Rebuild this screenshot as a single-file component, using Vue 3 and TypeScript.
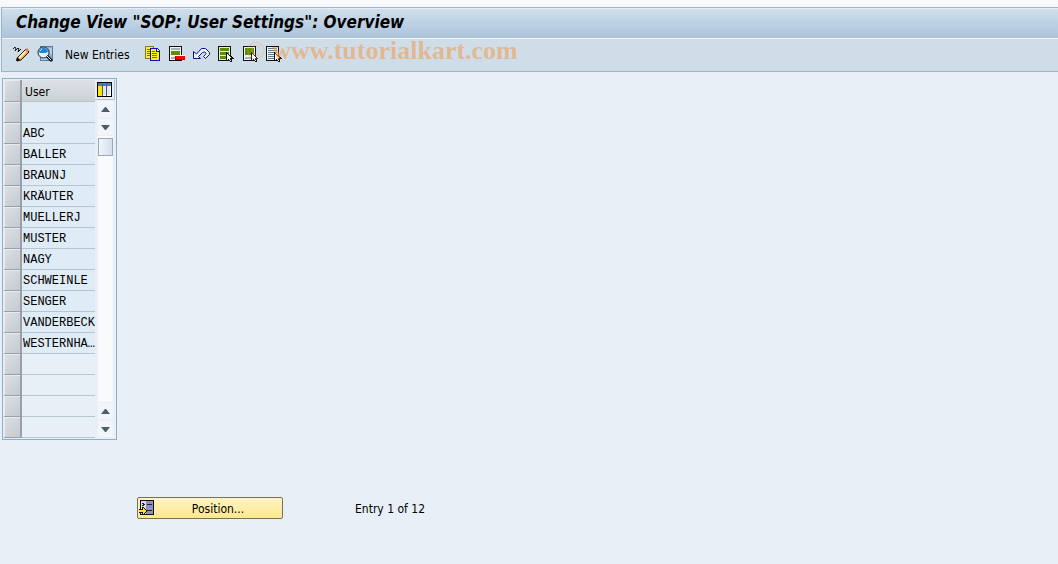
<script setup lang="ts">
interface Row { id: number; user: string }

const users: string[] = [
  '', 'ABC', 'BALLER', 'BRAUNJ', 'KRÄUTER', 'MUELLERJ', 'MUSTER', 'NAGY',
  'SCHWEINLE', 'SENGER', 'VANDERBECK', 'WESTERNHA…',
]
const rowCount = 16
const rows: Row[] = Array.from({ length: rowCount }, (_, i) => ({ id: i, user: users[i] ?? '' }))
const isEntry = (row: Row): boolean => row.id < users.length
</script>

<template>
  <div class="screen">
    <header class="head">
      <h1 class="title">Change View "SOP: User Settings": Overview</h1>
      <nav class="toolbar" aria-label="Application toolbar">
        <button class="tool" type="button" aria-label="Display/Change">
          <svg viewBox="0 0 16 16" width="16" height="16">
            <path d="M0 3l2-2 1 2-1 2 3-3 1 1-1 3 3-3" fill="none" stroke="#111" />
            <path d="M5 11l8-8 3 3-8 8-4 1z" fill="#f9ad4e" stroke="#17120c" />
            <path d="M6 12l7-7" stroke="#fff0a8" stroke-width="2" />
            <path d="M12 4l2-2 2 2-2 2z" fill="#e27858" />
            <path d="M3 15l1-4 3 3z" fill="#000" />
          </svg>
        </button>
        <button class="tool" type="button" aria-label="Details">
          <svg viewBox="0 0 16 16" width="16" height="16">
            <path d="M3 0h13v15H3z" fill="#4f7fb0" />
            <path d="M4 1h11v13H4z" fill="#8fb0cc" />
            <path d="M12 3h3M13 5h2M13 7h2M4 13h6" stroke="#e3eef6" />
            <circle cx="6.500" cy="6.500" r="5.500" fill="#dff3ff" stroke="#222" />
            <path d="M2 6c0-3 2-4 5-4 2 0 4 1 4 4l-3 1H3z" fill="#1a86dc" />
            <path d="M3 5l2-2" stroke="#b6e2ff" />
            <path d="M10 10l5 5" stroke="#111" stroke-width="3" />
            <path d="M10 10l4 4" stroke="#fff" />
          </svg>
        </button>
        <button class="text-tool" type="button">New Entries</button>
        <button class="tool" type="button" aria-label="Copy As">
          <svg viewBox="0 0 16 16" width="16" height="16" shape-rendering="crispEdges">
            <path d="M0 0h9v13H0z" fill="#7f7a28" />
            <path d="M1 1h7v11H1z" fill="#ffef2e" />
            <path d="M2 3h3v1H2zM2 5h3v1H2zM2 7h3v1H2zM2 9h3v1H2z" fill="#77732a" />
            <path d="M5 2h7l3 3v10H5z" fill="#0b0bd8" />
            <path d="M6 3h5v3h3v8H6z" fill="#fff200" />
            <path d="M12 3l2 2h-2z" fill="#fff" />
            <path d="M7 5h3v1H7zM7 7h5v1H7zM7 9h5v1H7zM7 11h5v1H7z" fill="#77732a" />
          </svg>
        </button>
        <button class="tool" type="button" aria-label="Delete">
          <svg viewBox="0 0 16 16" width="16" height="16" shape-rendering="crispEdges">
            <path d="M0 0h13v15H0z" fill="#111" />
            <path d="M1 1h11v13H1z" fill="#f1f6f8" />
            <path d="M2 2h9v2H2zM2 11h5v2H2z" fill="#a3b1bd" />
            <path d="M2 5h9v4H2z" fill="#5f8f00" />
            <path d="M6 9h10v5H6z" fill="#fff" />
            <path d="M6 10h10v4H6z" fill="#b40000" />
            <path d="M7 10h9v3H7z" fill="#f00" />
          </svg>
        </button>
        <button class="tool" type="button" aria-label="Undo Change">
          <svg viewBox="0 0 17 16" width="17" height="16">
            <path d="M.5 5.500v7h7l-2-2 4-4q2-1 3 0t0 2l-2 2 2 2 4-4V6.500l-4-4h-4l-5 5.500z" fill="#eaf2fa" stroke="#10108c" />
          </svg>
        </button>
        <button class="tool" type="button" aria-label="Select All">
          <svg viewBox="0 0 16 16" width="16" height="16" shape-rendering="crispEdges">
            <path d="M0 0h13v15H0z" fill="#111" />
            <path d="M1 1h11v13H1z" fill="#e4efcb" />
            <path d="M2 2h9v3H2zM2 6h9v3H2zM2 10h9v3H2z" fill="#5f8f00" />
            <path d="M8 6v9h2l1-1 1 2h2v-3h2v-1z" fill="#111" />
            <path d="M9 8v6l2-2 1 3h1l-1-3h2z" fill="#fff" />
          </svg>
        </button>
        <button class="tool" type="button" aria-label="Select Block">
          <svg viewBox="0 0 16 16" width="16" height="16" shape-rendering="crispEdges">
            <path d="M1 0h13v15H1z" fill="#111" />
            <path d="M2 1h11v13H2z" fill="#f1f6f8" />
            <path d="M3 2h9v7H3z" fill="#5f8f00" />
            <path d="M3 11h6v2H3z" fill="#a3b1bd" />
            <path d="M9 6v9h2l1-1 1 2h2v-3h1v-1z" fill="#111" />
            <path d="M10 8v6l2-2 1 3h1l-1-3h2z" fill="#fff" />
          </svg>
        </button>
        <button class="tool" type="button" aria-label="Deselect All">
          <svg viewBox="0 0 16 16" width="16" height="16" shape-rendering="crispEdges">
            <path d="M0 0h13v15H0z" fill="#111" />
            <path d="M1 1h11v13H1z" fill="#f1f6f8" />
            <path d="M2 2h9v1H2zM2 4h9v1H2zM2 6h9v1H2zM2 8h9v1H2zM2 10h7v1H2zM2 12h6v1H2z" fill="#5e7e94" />
            <path d="M8 6v9h2l1-1 1 2h2v-3h2v-1z" fill="#111" />
            <path d="M9 8v6l2-2 1 3h1l-1-3h2z" fill="#fff" />
          </svg>
        </button>
      </nav>
      <span class="watermark"><span class="copy">©</span> www.tutorialkart.com</span>
    </header>

    <main>
      <section class="grid-box">
        <table class="grid">
          <thead>
            <tr><th class="sel" aria-label="Selection"></th><th class="user">User</th></tr>
          </thead>
          <tbody>
            <tr v-for="row in rows" :key="row.id">
              <td class="sel"></td>
              <td class="user" :class="{ entry: isEntry(row) }">{{ row.user }}</td>
            </tr>
          </tbody>
        </table>
        <div class="side">
          <button class="config" type="button" aria-label="Table Settings">
            <svg viewBox="0 0 15 15" width="15" height="15" shape-rendering="crispEdges">
              <path d="M0 0h15v15H0z" fill="#000" />
              <path d="M1 1h13v13H1z" fill="#fff" />
              <path d="M1 1h13v3H1z" fill="#3b82c4" />
              <path d="M1 4h4v10H1z" fill="#ffe600" />
              <path d="M5 2h1v12H5zM9 2h1v12H9z" fill="#4a5b6b" />
              <path d="M6 4h3v9H6zM10 4h3v9h-3z" fill="#dfe7ee" />
            </svg>
          </button>
          <button class="arrow" type="button" aria-label="First page"><svg viewBox="0 0 9 5" width="9" height="5"><path d="M0 5l4-5h1l4 5z" fill="#4b5f6e" /></svg></button>
          <button class="arrow" type="button" aria-label="Line down"><svg viewBox="0 0 9 5" width="9" height="5"><path d="M0 0h9L5 5H4z" fill="#4b5f6e" /></svg></button>
          <div class="track"><div class="thumb"></div></div>
          <button class="arrow" type="button" aria-label="Line up"><svg viewBox="0 0 9 5" width="9" height="5"><path d="M0 5l4-5h1l4 5z" fill="#4b5f6e" /></svg></button>
          <button class="arrow" type="button" aria-label="Last page"><svg viewBox="0 0 9 5" width="9" height="5"><path d="M0 0h9L5 5H4z" fill="#4b5f6e" /></svg></button>
        </div>
      </section>

      <footer class="foot">
        <button class="position" type="button">
          <svg viewBox="0 0 16 16" width="16" height="16" shape-rendering="crispEdges">
            <path d="M1 0h14v15H1z" fill="#111" />
            <path d="M2 1h12v13H2z" fill="#8f8fc0" />
            <path d="M2 1h5v13H2z" fill="#dadde8" />
            <path d="M3 3h2v1H3zM4 4h2v1H4zM3 5h2v1H3zM8 4h5v1H8zM8 10h5v1H8z" fill="#222" />
            <path d="M0 9h3V7h1l4 4-4 4H3v-2H0z" fill="#111" />
            <path d="M0 10h4V8l3 3-3 3v-2H0z" fill="#ffe600" />
          </svg>
          <span>Position...</span>
        </button>
        <span class="count">Entry 1 of 12</span>
      </footer>
    </main>
  </div>
</template>

<style>
body { margin: 0; background: #e8eff7; }
</style>

<style scoped>
.screen {
  box-sizing: border-box;
  min-height: 100vh;
  padding-top: 7px;
  background: linear-gradient(#f8fafd, #f4f7fb) top / 100% 7px no-repeat #e8eff7;
  color: #000;
  font: 12px/16px "DejaVu Sans Condensed", "DejaVu Sans", sans-serif;
}
button {
  margin: 0;
  padding: 0;
  border: 0;
  background: none;
  color: inherit;
  font: inherit;
}
svg { display: block; }
.head {
  position: relative;
  margin-left: 1px;
  border: 1px solid #9fb5cc;
  border-right: 0;
}
.title {
  margin: 0;
  padding-left: 14px;
  border-top: 1px solid #e4eef6;
  border-bottom: 1px solid #f3f7fa;
  background: linear-gradient(#cfdfeb, #abc3db);
  font: italic bold 17px/29px "DejaVu Sans Condensed", "DejaVu Sans", sans-serif;
  line-height: 27px;
  padding-bottom: 2px;
}
.toolbar {
  display: flex;
  align-items: center;
  gap: 8px;
  box-sizing: border-box;
  height: 32px;
  padding: 0 0 2px 11px;
  background: #cfdde8;
}
.text-tool { margin: 0 7px 0 4px; padding-top: 2px; }
.watermark {
  position: absolute;
  left: 244px;
  top: 28px;
  color: rgba(240, 160, 90, 0.6);
  font: bold 26px/30px "Liberation Serif", serif;
  white-space: pre;
  pointer-events: none;
}
.copy { font-weight: normal; opacity: 0.6; }
.grid-box {
  display: flex;
  width: max-content;
  margin: 6px 0 0 2px;
  padding: 1px;
  border: 1px solid #8faccb;
  background: #e8eff7;
}
.grid { border-collapse: separate; border-spacing: 0; table-layout: fixed; }
.grid th, .grid td {
  box-sizing: border-box;
  height: 21px;
  padding: 0;
  text-align: left;
  font-weight: normal;
}
.grid .sel {
  width: 18px;
  border: 1px solid #98a1ab;
  border-width: 0 2px 1px 0;
  background: linear-gradient(135deg, #dde0e4, #c5cad0);
  box-shadow: inset 1px 1px #e9ebee;
}
.grid .user {
  width: 73px;
  border-bottom: 1px solid #b7c4d2;
  padding-left: 1px;
}
.grid td.user { padding-top: 2px; font: 12px/18px "Liberation Mono", monospace; }
.grid th { height: 22px; }
.grid th.user { padding: 2px 0 0 3px; background: linear-gradient(#dde2e7, #ccd1d7); }
.grid .entry { background: #dfebf5; }
.side {
  display: flex;
  flex-direction: column;
  align-items: center;
  width: 20px;
}
.config { padding: 2px; border: 1px solid #b5bec8; border-width: 0 1px 1px 0; }
.arrow {
  display: grid;
  place-items: center;
  width: 15px;
  height: 16px;
  margin: 1px 0;
  background: #f2f6fa;
}
.track { flex: 1; width: 15px; padding-top: 2px; background: #f8fafc; }
.thumb {
  box-sizing: border-box;
  height: 18px;
  border: 1px solid #9aaab8;
  background: linear-gradient(90deg, #f2f6fa, #d3deea);
}
.foot {
  display: flex;
  align-items: center;
  gap: 72px;
  margin: 57px 0 0 137px;
}
.position {
  display: flex;
  align-items: center;
  box-sizing: border-box;
  width: 146px;
  height: 22px;
  padding: 0 1px;
  border: 1px solid #77705c;
  border-radius: 2px;
  background: linear-gradient(#fff4c4, #fde88c);
}
.position span { flex: 1; padding-top: 2px; text-align: center; }
.count { padding-top: 2px; }
</style>
